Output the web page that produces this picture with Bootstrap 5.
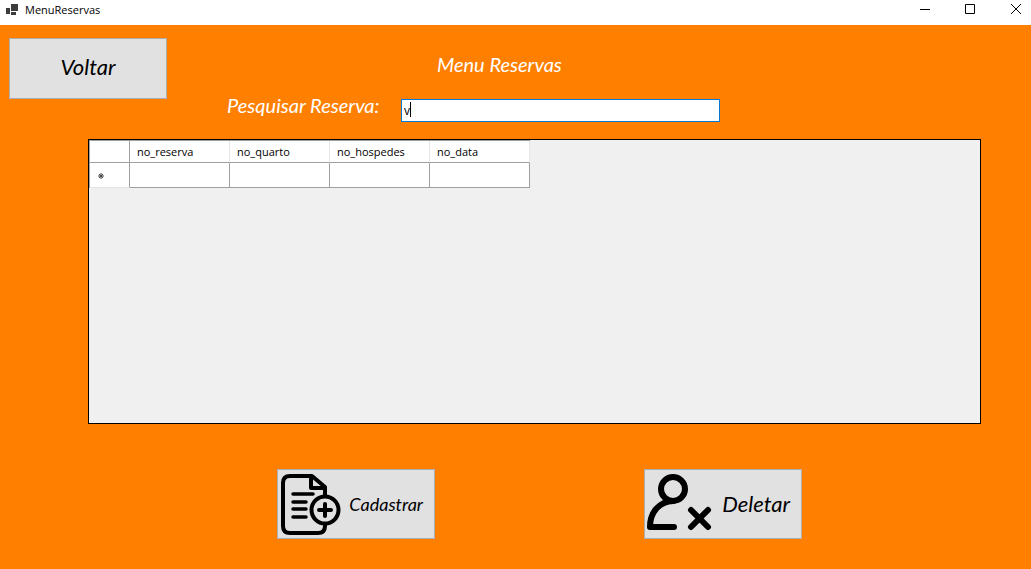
<!DOCTYPE html>
<html lang="pt-BR">
<head>
<meta charset="utf-8">
<meta name="viewport" content="width=device-width, initial-scale=1">
<title>MenuReservas</title>
<link href="https://cdn.jsdelivr.net/npm/bootstrap@5.3.0/dist/css/bootstrap.min.css" rel="stylesheet">
<style>
body { background: #ff8000; color: #000; font: 11px/16px "Open Sans", "Noto Sans", sans-serif; }
.titlebar { height: 25px; padding: 0 9px 6px 6px; background: #fff; }
.titlebar button { padding: 0; border: 0; background: none; line-height: 0; }
.app-name { gap: 7px; }
.win-controls { gap: 33px; }
.script { font-family: "Lato", sans-serif; font-style: italic; font-weight: 400; font-size: 20px; line-height: 32px; white-space: nowrap; }
.action { width: 158px; border: 1px solid #adadad; background: #e1e1e1; color: #000; padding: 0; font-size: 22px; }
.action-back { height: 61px; padding-bottom: 4px; }
.action-icon { height: 70px; padding: 0 11px 0 2px; }
.action-long { font-size: 18px; }
.top { padding: 13px 9px 0; gap: 60px; }
.search-area { width: 493px; padding-top: 10px; }
.page-title { padding-left: 210px; margin: 0 0 9px; }
.search-label { width: 174px; margin-bottom: 1px; }
/* the text cursor is drawn as a thin background bar */
.search-input { height: 23px; min-width: 0; border: 1px solid #0078d7; background: linear-gradient(#000, #000) 8px 2px / 1px 15px no-repeat #fff; caret-color: transparent; padding: 0 2px; outline: 0; font-size: 12px; }
.grid-area { margin: 17px 50px 0 88px; min-height: 285px; border: 1px solid #000; background: #f0f0f0; }
.data-grid { width: 441px; table-layout: fixed; border-collapse: separate; border-spacing: 0; background: #fff; border-left: 1px solid #a0a0a0; border-top: 1px solid #a0a0a0; }
.data-grid th, .data-grid td { padding: 0 7px; border-right: 1px solid #a0a0a0; border-bottom: 1px solid #a0a0a0; font-weight: 400; }
.data-grid thead th { height: 22px; }
.data-grid td { height: 25px; }
.data-grid thead th + th { border-right-color: #e5e5e5; }
.data-grid tbody th { border-bottom-color: #e5e5e5; padding-top: 2px; }
.row-head { width: 40px; }
.bottom { padding: 45px 50px 30px 98px; gap: 209px; }
</style>
</head>
<body>
<header class="titlebar d-flex align-items-center justify-content-between">
  <div class="app-name d-flex align-items-center">
    <svg width="12" height="12" viewBox="0 0 12 12" fill="#3c3c3c" aria-hidden="true"><path d="M5 0h7v7H5zM0 4h4v6H0zM5 8h5v3H5z"/></svg>
    <span>MenuReservas</span>
  </div>
  <div class="win-controls d-flex">
    <button type="button" aria-label="Minimizar"><svg width="12" height="12" stroke="#000"><path d="M0 5.500h10"/></svg></button>
    <button type="button" aria-label="Maximizar"><svg width="12" height="12" stroke="#000" fill="none"><path d="M.5 .5h9v9h-9z"/></svg></button>
    <button type="button" aria-label="Fechar"><svg width="12" height="12" stroke="#000"><path d="M1 0l10 10M11 0L1 10"/></svg></button>
  </div>
</header>
<main>
  <div class="top d-flex align-items-start">
    <button type="button" class="action action-back script flex-shrink-0">Voltar</button>
    <div class="search-area">
      <h1 class="page-title script text-white">Menu Reservas</h1>
      <div class="d-flex align-items-end">
        <label for="busca" class="search-label script text-white flex-shrink-0">Pesquisar Reserva:</label>
        <input id="busca" type="text" class="search-input flex-grow-1" value="v">
      </div>
    </div>
  </div>
  <div class="grid-area">
    <table class="data-grid">
      <thead>
        <tr><th class="row-head"></th><th scope="col">no_reserva</th><th scope="col">no_quarto</th><th scope="col">no_hospedes</th><th scope="col">no_data</th></tr>
      </thead>
      <tbody>
        <tr><th scope="row"><svg class="d-block" width="8" height="8" stroke="#404040" aria-label="Nova linha"><path d="M4 1v6M1 4h6M2 2l4 4M6 2L2 6"/></svg></th><td></td><td></td><td></td><td></td></tr>
      </tbody>
    </table>
  </div>
  <div class="bottom d-flex justify-content-center">
    <button type="button" class="action action-icon action-long script d-flex align-items-center justify-content-between">
      <svg class="flex-shrink-0" width="62" height="64" viewBox="0 0 62 64" fill="none" stroke="#000" stroke-width="4" stroke-linecap="round" stroke-linejoin="round" aria-hidden="true"><path d="M45 23V15L32 4H10q-7 0-7 7v43q0 7 7 7h28q7 0 7-7v-1M31 4v12h14"/><path d="M13 22h20M13 30h13M13 37h13M13 45h13" stroke-width="3.500"/><circle cx="45" cy="38" r="13.500"/><path d="M45 32v12M39 38h12"/></svg>
      <span>Cadastrar</span>
    </button>
    <button type="button" class="action action-icon script d-flex align-items-center justify-content-between">
      <svg class="flex-shrink-0" width="66" height="64" viewBox="0 0 66 64" fill="none" stroke="#000" stroke-width="6" stroke-linecap="round" stroke-linejoin="round" aria-hidden="true"><circle cx="26" cy="17" r="12"/><path d="M26 29C12 30 3 40 3 55h24"/><path d="M44 38l17 17M61 38l-17 17"/></svg>
      <span>Deletar</span>
    </button>
  </div>
</main>
<script src="https://cdn.jsdelivr.net/npm/bootstrap@5.3.0/dist/js/bootstrap.bundle.min.js"></script>
</body>
</html>
